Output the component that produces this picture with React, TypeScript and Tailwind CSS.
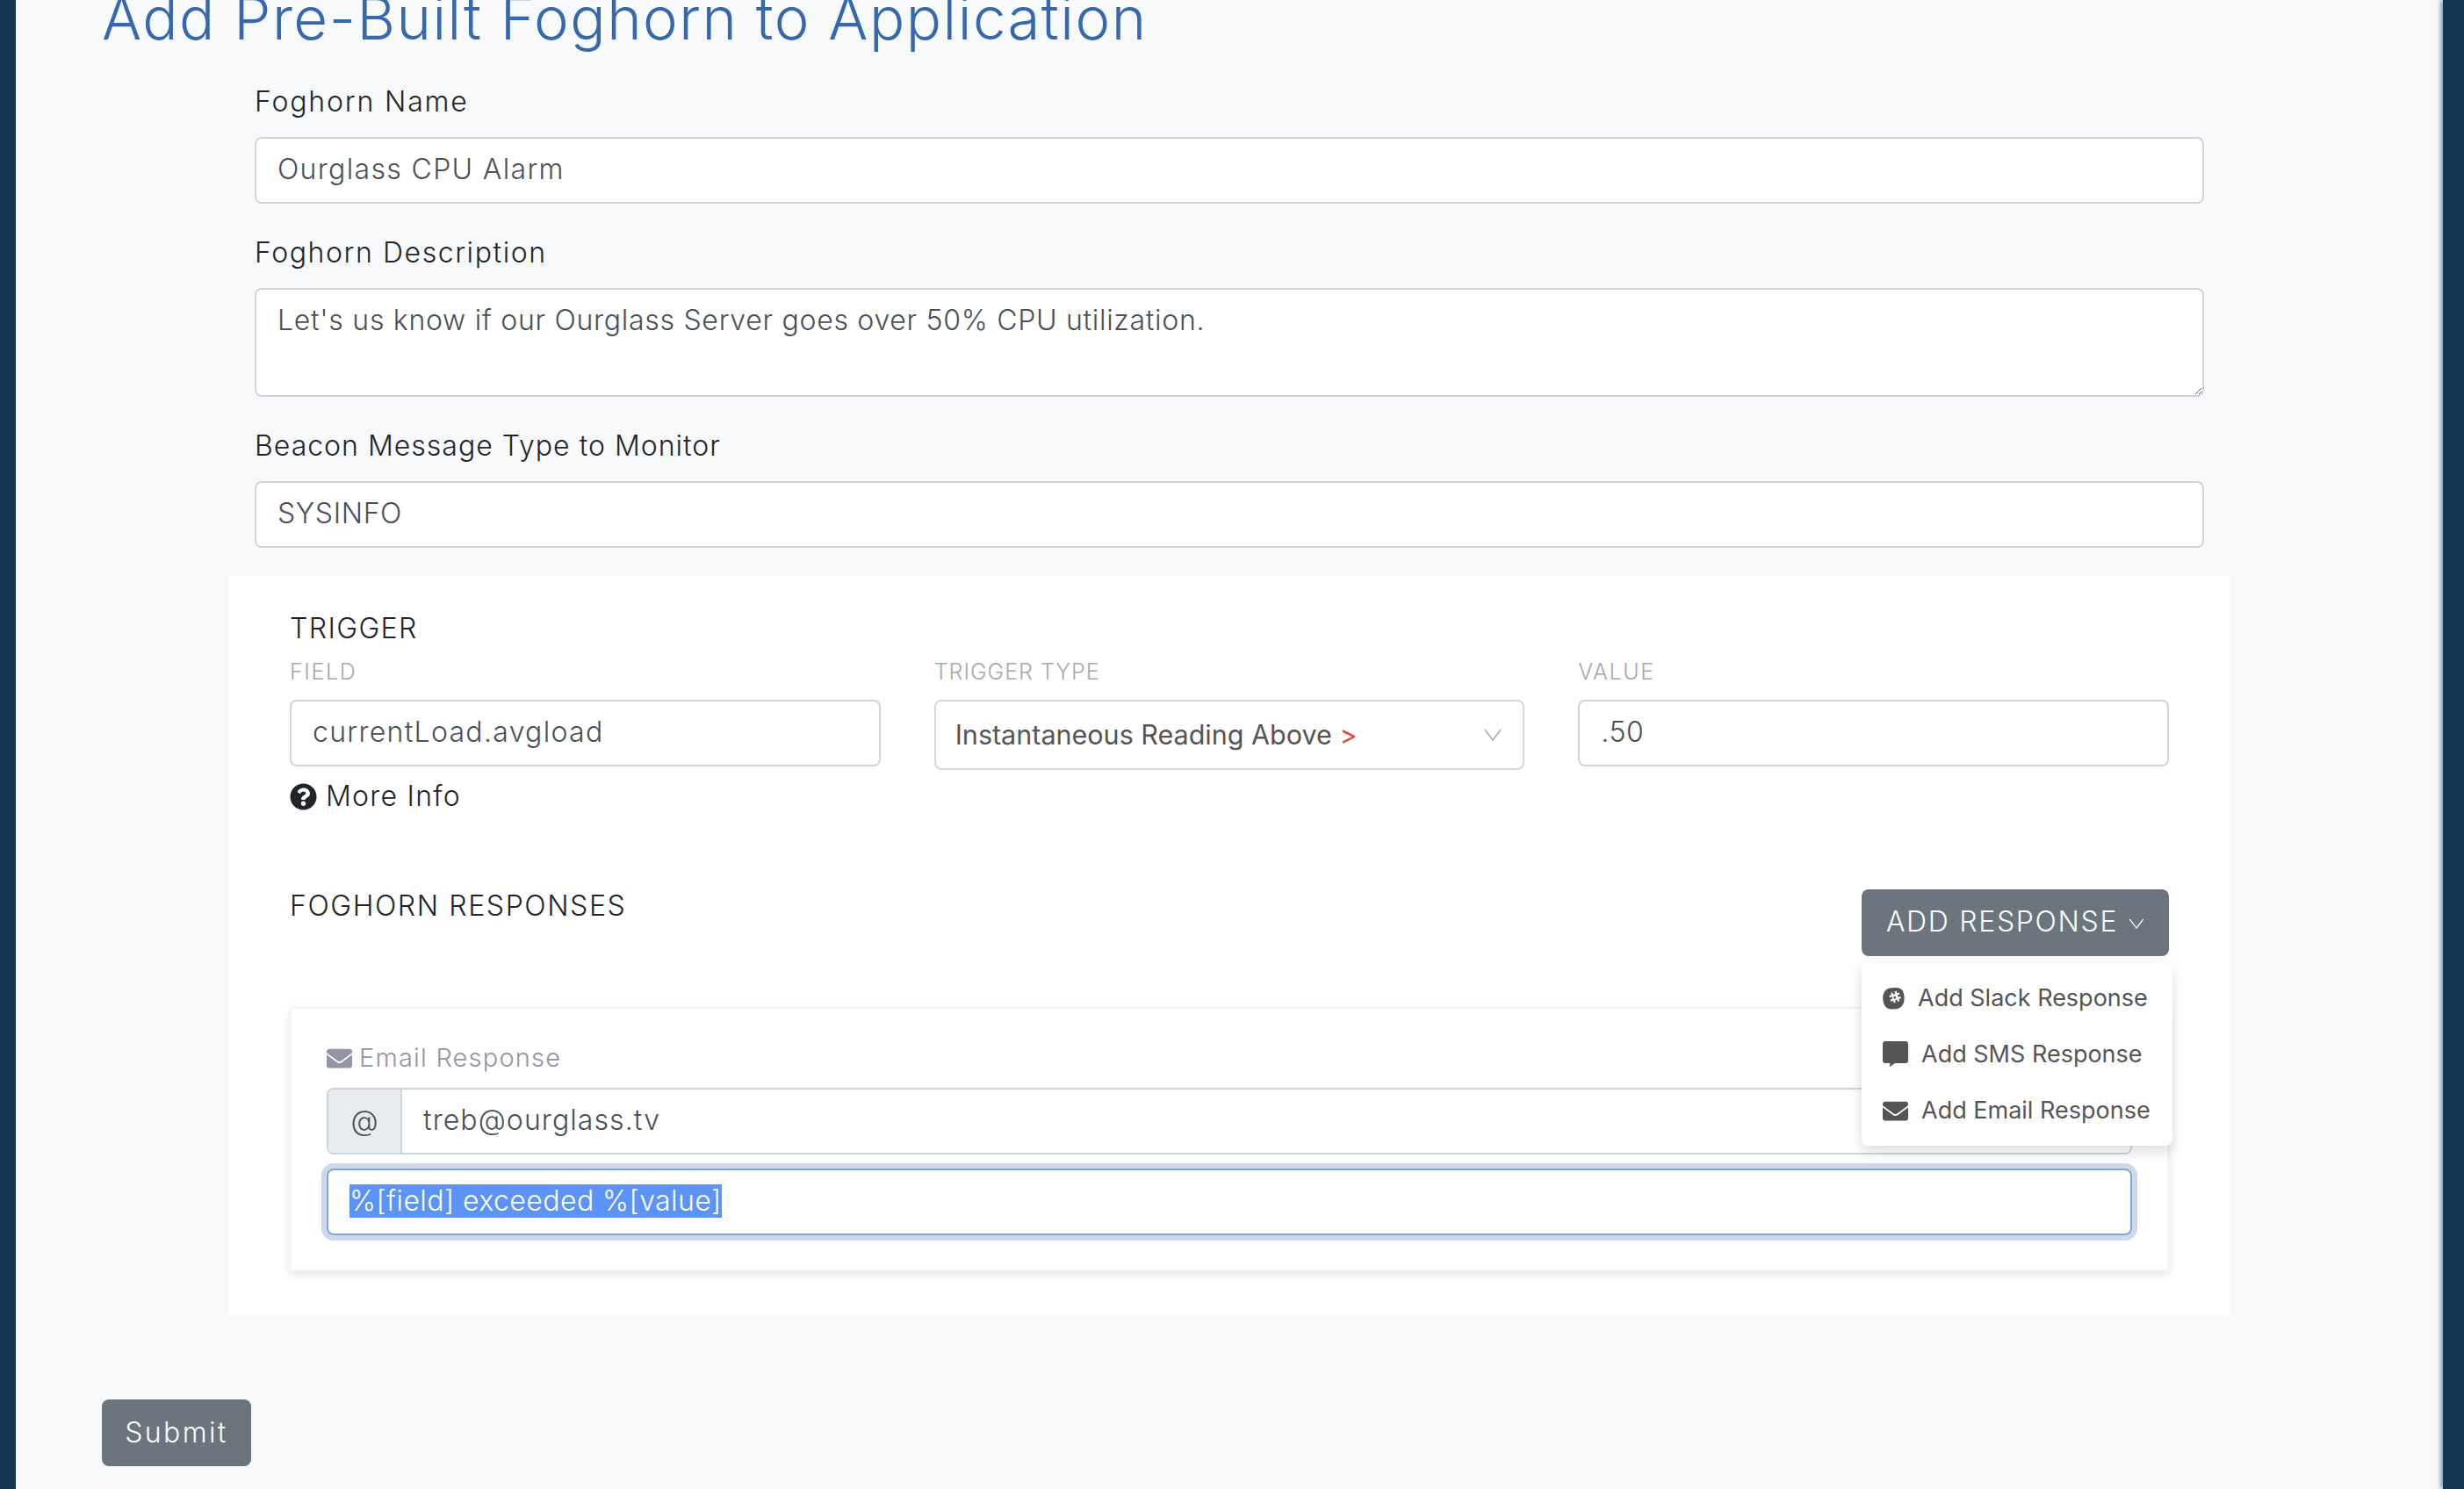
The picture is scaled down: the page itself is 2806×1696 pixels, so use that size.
import { FaEnvelope, FaQuestionCircle } from 'react-icons/fa'

const body = "font-['Inter',sans-serif] font-light"
const inputCls =
  'block w-full h-[76px] px-6 pb-[3px] bg-white border-2 border-[#ced4da] rounded-lg text-[32px] text-[#495057] outline-none'

function Field({ label, tracking, children }: { label: string; tracking: string; children: React.ReactNode }) {
  return (
    <div className="mb-8">
      <label className={`block h-12 mb-4 text-[32px] leading-[48px] text-[#212529] ${tracking}`}>{label}</label>
      {children}
    </div>
  )
}

function SmallField({ label, tracking, children }: { label: string; tracking: string; children: React.ReactNode }) {
  return (
    <div className="flex-1 min-w-0">
      <div className={`h-9 mb-[14px] text-[25px] leading-9 text-[#a8a8a8] ${tracking}`}>{label}</div>
      {children}
    </div>
  )
}

function SlackIcon() {
  return (
    <svg viewBox="0 0 24 24" className="w-[25px] h-[25px]">
      <path
        fill="#555"
        fillRule="evenodd"
        d="M7 .8C11-.3 17-.3 20 1.5c3 2 4 7.500 3.500 12-.5 4.500-2.500 8-6.500 9.200-4 1-9.500 1.300-12.500-.7C1.500 20 .3 15 .2 11 .2 6.500 2.500 2 7 .8ZM9 5.500l.6 2.400-2.500.8.600 2 2.500-.8.700 2.300-2.500.8.600 2 2.500-.8.700 2.400 2-.6-.8-2.400 2.300-.7.700 2.400 2-.6-.7-2.400 2.400-.8-.600-2-2.400.8-.8-2.300 2.400-.8-.6-2-2.400.8-.7-2.400-2 .6.700 2.400-2.300.8-.700-2.400ZM11.700 10.100l2.300-.8.8 2.300-2.300.8Z"
      />
    </svg>
  )
}

function SmsIcon() {
  return (
    <svg viewBox="0 0 29 29" className="w-[29px] h-[29px] -mt-[2px]">
      <path fill="#555" d="M3 0h23a3 3 0 0 1 3 3v19a3 3 0 0 1-3 3H14l-6.500 4.500 1-4.500H3a3 3 0 0 1-3-3V3a3 3 0 0 1 3-3Z" />
    </svg>
  )
}

function Chevron({ className }: { className: string }) {
  return (
    <svg viewBox="0 0 20 14" fill="none" className={className}>
      <path d="M1 1l9 12 9-12" stroke="currentColor" strokeWidth="1.500" />
    </svg>
  )
}

function AddResponseMenu() {
  const items = [
    { label: 'Add Slack Response', icon: <SlackIcon /> },
    { label: 'Add SMS Response', icon: <SmsIcon /> },
    { label: 'Add Email Response', icon: <FaEnvelope className="w-[29px] h-[29px] text-[#555]" /> },
  ]
  return (
    <div className="relative w-[350px] h-[76px]">
      <button className="w-full h-full flex items-center justify-center gap-3 pb-[2px] bg-[#6c757d] rounded-lg text-white text-[32px] tracking-[1.68px]">
        ADD RESPONSE
        <Chevron className="w-[18px] h-[12px] mt-1" />
      </button>
      <div className="absolute z-10 left-0 top-[84px] w-[354px] py-2 bg-white rounded-lg shadow-[0_6px_16px_rgba(0,0,0,0.15)]">
        {items.map((item) => (
          <div key={item.label} className="flex items-center h-16 pl-6 gap-[15px] font-normal text-[27px] text-[#555] whitespace-nowrap">
            {item.icon}
            {item.label}
          </div>
        ))}
      </div>
    </div>
  )
}

export default function App() {
  return (
    <div className={`${body} flex h-[1696px] w-full overflow-hidden bg-[#f8f9fa]`}>
      <div className="w-[18px] shrink-0 bg-[#17364f]" />

      <main className="flex-1 min-w-0 pl-[98px] pr-[100px]">
        <h1 className="-mt-[18px] mb-[33px] h-[77px] text-[67px] leading-[77px] text-[#3568ad] tracking-[1.5px] whitespace-nowrap">
          Add Pre-Built Foghorn to Application
        </h1>

        <div className="pl-[174px] pr-[172px]">
          <Field label="Foghorn Name" tracking="tracking-[1.84px]">
            <input className={`${inputCls} tracking-[1.34px]`} value="Ourglass CPU Alarm" readOnly />
          </Field>
          <Field label="Foghorn Description" tracking="tracking-[1.58px]">
            <textarea
              className="block w-full h-[124px] px-6 pt-[11px] pb-3 bg-white border-2 border-[#ced4da] rounded-lg text-[32px] leading-[48px] text-[#495057] outline-none tracking-[0.72px]"
              value="Let's us know if our Ourglass Server goes over 50% CPU utilization."
              readOnly
            />
          </Field>
          <Field label="Beacon Message Type to Monitor" tracking="tracking-[1px]">
            <input className={`${inputCls} tracking-[0.64px]`} value="SYSINFO" readOnly />
          </Field>
        </div>

        <section className="ml-[144px] w-[2280px] h-[842px] bg-white px-[70px] pt-[36px]">
          <h2 className="h-12 text-[32px] leading-[48px] text-[#212529] tracking-[1.4px]">TRIGGER</h2>
          <div className="flex gap-[61px] mt-[7px]">
            <SmallField label="FIELD" tracking="tracking-[1.6px]">
              <input className={`${inputCls} tracking-[1.3px]`} value="currentLoad.avgload" readOnly />
              <div className="flex items-center gap-[10px] mt-4 mb-[2px] h-9 text-[32px] text-[#212529] tracking-[1.24px]">
                <FaQuestionCircle className="w-[31px] h-[31px]" />
                More Info
              </div>
            </SmallField>
            <SmallField label="TRIGGER TYPE" tracking="tracking-[1px]">
              <div className="flex items-center justify-between h-[80px] pl-[22px] pr-6 bg-white border-2 border-[#d8d8d8] rounded-lg">
                <span className="font-normal text-[30.500px] text-[#555]">
                  Instantaneous Reading Above <span className="text-[#e0492f]">&gt;</span>
                </span>
                <Chevron className="w-5 h-[14px] text-[#aaa]" />
              </div>
            </SmallField>
            <SmallField label="VALUE" tracking="tracking-[1.6px]">
              <input className={`${inputCls} tracking-[0.5px]`} value=".50" readOnly />
            </SmallField>
          </div>

          <div className="flex justify-between mt-[86px]">
            <h2 className="mt-[-5px] text-[32px] leading-[48px] text-[#212529] tracking-[1.6px]">FOGHORN RESPONSES</h2>
            <AddResponseMenu />
          </div>

          <div className="mt-[58px] h-[301px] border-2 border-[#f5f5f5] pl-[40px] pr-[40px] pt-[38px] shadow-[0_4px_10px_rgba(0,0,0,0.1)]">
            <div className="flex items-center gap-2 h-9 mb-[16px] text-[29px] text-[#9394a5] tracking-[1.2px]">
              <FaEnvelope className="w-[29px] h-[29px]" />
              Email Response
            </div>
            <div className="flex h-[76px] mb-4 border-2 border-[#ced4da] rounded-lg overflow-hidden text-[32px] text-[#495057]">
              <span className="flex items-center justify-center w-[84px] shrink-0 bg-[#e9ecef] border-r-2 border-[#ced4da]">@</span>
              <input className="flex-1 min-w-0 px-6 pb-[3px] bg-white outline-none tracking-[1.09px]" value="treb@ourglass.tv" readOnly />
            </div>
            <div className="flex items-center h-[76px] px-6 pb-[2px] bg-white border-2 border-[#7ea6de] rounded-lg shadow-[0_0_0_6px_rgba(53,104,173,0.25)] text-[32px]">
              <span className="bg-[#5b93f7] text-white h-[38px] leading-[38px] tracking-[0.44px]">%[field] exceeded %[value]</span>
            </div>
          </div>
        </section>

        <button className="block mt-[96px] h-[76px] w-[170px] bg-[#6c757d] rounded-lg text-white text-[32px] tracking-[2.4px]">
          Submit
        </button>
      </main>

      <div className="w-[24px] shrink-0 bg-[#17364f] shadow-[-2px_0_5px_rgba(23,54,79,0.6)]" />
    </div>
  )
}
